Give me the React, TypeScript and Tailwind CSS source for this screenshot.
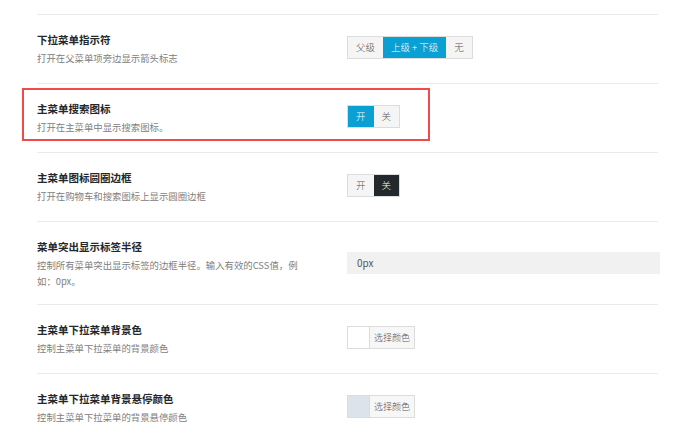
import React from 'react';

type Option = { label: string; active?: boolean; dark?: boolean };

const SegmentGroup = ({ options }: { options: Option[] }) => (
  <div className="inline-flex border border-[#dcdcdc]">
    {options.map((opt, i) => (
      <span
        key={i}
        className={
          opt.active
            ? 'h-[21px] px-[8px] flex items-center text-[9.5px] font-light bg-[#0aa0d3] text-white'
            : opt.dark
            ? 'h-[21px] px-[8px] flex items-center text-[9.5px] font-light bg-[#23282d] text-white'
            : 'h-[21px] px-[8px] flex items-center text-[9.5px] font-light bg-[#f5f5f5] text-[#555]'
        }
      >
        {opt.label}
      </span>
    ))}
  </div>
);

const ColorPicker = ({ color }: { color: string }) => (
  <div className="inline-flex border border-[#dcdcdc]">
    <span className="w-[22px] h-[21px] border-r border-[#dcdcdc]" style={{ backgroundColor: color }}></span>
    <span className="h-[21px] px-[4px] flex items-center text-[9px] font-light text-[#555] bg-[#f7f7f7]">选择颜色</span>
  </div>
);

const Row = ({
  title,
  desc,
  children,
  highlight,
  tall,
}: {
  title: string;
  desc: string;
  children: React.ReactNode;
  highlight?: boolean;
  tall?: boolean;
}) => (
  <div
    className={
      tall
        ? 'relative flex items-center border-t border-[#ebebeb] pt-[17px] pb-[15px]'
        : 'relative flex items-center border-t border-[#ebebeb] py-[17px]'
    }
  >
    <div className="w-[310px] shrink-0">
      <div className="max-w-[265px]">
        <div className="text-[10.5px] leading-[16px] font-semibold text-[#23282d] mb-[2px]">{title}</div>
        <div className="text-[9.4px] leading-[16px] text-[#808080]">{desc}</div>
      </div>
    </div>
    <div className="flex flex-1 -mt-[3px]">{children}</div>
    {highlight && (
      <div className="absolute left-[-15px] top-[4px] w-[408px] h-[53px] border-2 border-[#f04a4a] pointer-events-none"></div>
    )}
  </div>
);

export default function App() {
  return (
    <div
      className="w-[692px] h-[438px] bg-white overflow-hidden pt-[14px]"
      style={{ fontFamily: '"Noto Sans CJK SC", "Noto Sans", sans-serif' }}
    >
      <div className="w-[658px] pl-[37px]">
        <Row title="下拉菜单指示符" desc="打开在父菜单项旁边显示箭头标志">
          <SegmentGroup options={[{ label: '父级' }, { label: '上级 + 下级', active: true }, { label: '无' }]} />
        </Row>
        <Row title="主菜单搜索图标" desc="打开在主菜单中显示搜索图标。" highlight>
          <SegmentGroup options={[{ label: '开', active: true }, { label: '关' }]} />
        </Row>
        <Row title="主菜单图标圆圈边框" desc="打开在购物车和搜索图标上显示圆圈边框">
          <SegmentGroup options={[{ label: '开' }, { label: '关', dark: true }]} />
        </Row>
        <Row title="菜单突出显示标签半径" desc="控制所有菜单突出显示标签的边框半径。输入有效的CSS值，例如：0px。" tall>
          <div className="w-[313px] h-[22px] bg-[#f1f1f1] flex items-center pl-[10px] text-[10px] text-[#555]">0px</div>
        </Row>
        <Row title="主菜单下拉菜单背景色" desc="控制主菜单下拉菜单的背景颜色">
          <ColorPicker color="#ffffff" />
        </Row>
        <Row title="主菜单下拉菜单背景悬停颜色" desc="控制主菜单下拉菜单的背景悬停颜色">
          <ColorPicker color="#dde3ea" />
        </Row>
      </div>
    </div>
  );
}
